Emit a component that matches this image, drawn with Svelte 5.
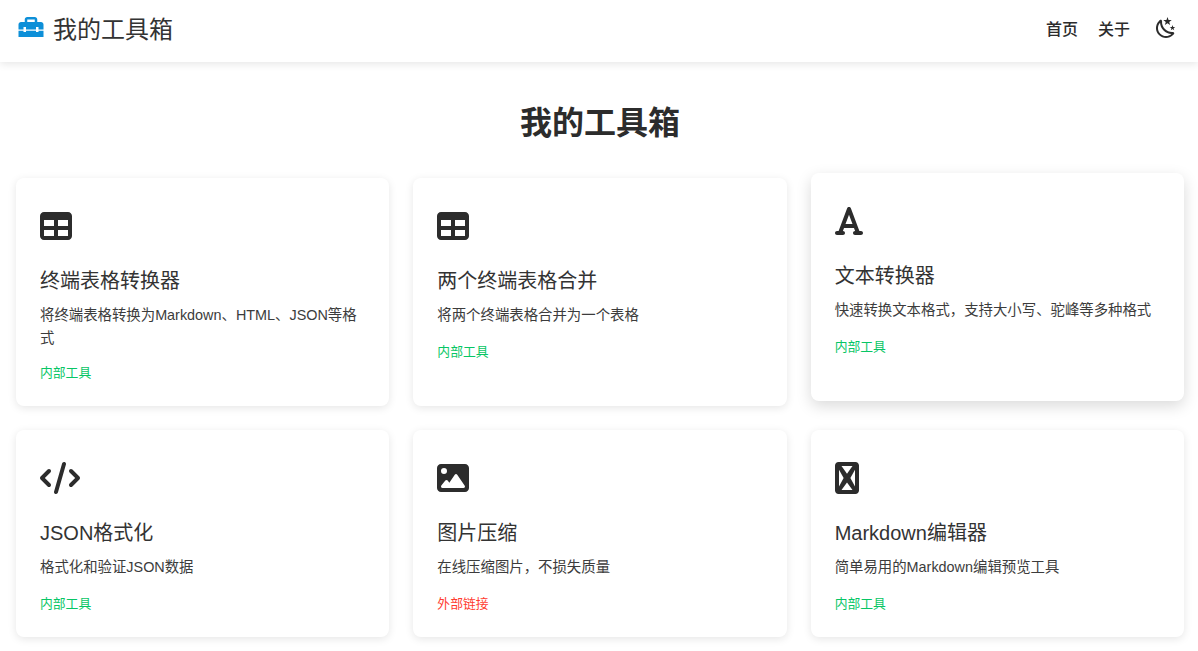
<script>
  const icons = {
    table: {
      box: "0 0 512 512",
      width: 32,
      d: "M64 256V160H224v96H64zm0 64H224v96H64V320zm224 96V320H448v96H288zM448 256H288V160H448v96zM64 32C28.7 32 0 60.7 0 96V416c0 35.3 28.7 64 64 64H448c35.3 0 64-28.7 64-64V96c0-35.3-28.7-64-64-64H64z",
    },
    font: {
      box: "0 0 448 512",
      width: 28,
      d: "M254 52.8C249.3 40.3 237.3 32 224 32s-25.3 8.3-30 20.8L57.8 416H32c-17.7 0-32 14.3-32 32s14.3 32 32 32h96c17.7 0 32-14.3 32-32s-14.3-32-32-32h-1.8l18-48H303.8l18 48H320c-17.7 0-32 14.3-32 32s14.3 32 32 32h96c17.7 0 32-14.3 32-32s-14.3-32-32-32H390.2L254 52.8zM279.8 304H168.2L224 155.1 279.8 304z",
    },
    code: {
      box: "0 0 640 512",
      width: 40,
      d: "M392.8 1.2c-17-4.9-34.7 5-39.6 22l-128 448c-4.9 17 5 34.7 22 39.6s34.7-5 39.6-22l128-448c4.9-17-5-34.7-22-39.6zm80.6 120.1c-12.5 12.5-12.5 32.8 0 45.3L562.7 256l-89.4 89.4c-12.5 12.5-12.5 32.8 0 45.3s32.8 12.5 45.3 0l112-112c12.5-12.5 12.5-32.8 0-45.3l-112-112c-12.5-12.5-32.8-12.5-45.3 0zm-306.7 0c-12.5-12.5-32.8-12.5-45.3 0l-112 112c-12.5 12.5-12.5 32.8 0 45.3l112 112c12.5 12.5 32.8 12.5 45.3 0s12.5-32.8 0-45.3L77.3 256l89.4-89.4c12.5-12.5 12.5-32.8 0-45.3z",
    },
    image: {
      box: "0 0 512 512",
      width: 32,
      d: "M0 96C0 60.7 28.7 32 64 32H448c35.3 0 64 28.7 64 64V416c0 35.3-28.7 64-64 64H64c-35.3 0-64-28.7-64-64V96zM323.8 202.5c-4.5-6.6-11.9-10.5-19.8-10.5s-15.4 3.9-19.8 10.5l-87 127.6L170.7 297c-4.6-5.7-11.5-9-18.7-9s-14.2 3.3-18.7 9l-64 80c-5.8 7.2-6.9 17.1-2.9 25.4s12.4 13.6 21.6 13.6h96 32H424c8.9 0 17.1-4.9 21.2-12.8s3.6-17.4-1.4-24.7l-120-176zM112 192a48 48 0 1 0 0-96 48 48 0 1 0 0 96z",
    },
    box: {
      box: "0 0 384 512",
      width: 24,
      d: "M56 0H328C359 0 384 25 384 56V456C384 487 359 512 328 512H56C25 512 0 487 0 456V56C0 25 25 0 56 0ZM104 64L192 186 280 64ZM64 122V390L138 256ZM320 122L246 256 320 390ZM192 326L104 448H280Z",
    },
  };

  const tools = [
    { icon: "table", name: "终端表格转换器", desc: "将终端表格转换为Markdown、HTML、JSON等格式", wrapped: true },
    { icon: "table", name: "两个终端表格合并", desc: "将两个终端表格合并为一个表格" },
    { icon: "font", name: "文本转换器", desc: "快速转换文本格式，支持大小写、驼峰等多种格式", hover: true },
    { icon: "code", name: "JSON格式化", desc: "格式化和验证JSON数据" },
    { icon: "image", name: "图片压缩", desc: "在线压缩图片，不损失质量", external: true },
    { icon: "box", name: "Markdown编辑器", desc: "简单易用的Markdown编辑预览工具" },
  ];
</script>

<nav class="navbar">
  <div class="brand">
    <svg class="logo" viewBox="0 0 24 24" aria-hidden="true">
      <path d="M18 16H16V15H8V16H6V15H2V20H22V15H18V16M20 8H17V6C17 4.9 16.1 4 15 4H9C7.9 4 7 4.9 7 6V8H4C2.9 8 2 8.9 2 10V14H6V12H8V14H16V12H18V14H22V10C22 8.9 21.1 8 20 8M15 8H9V6H15V8Z" />
    </svg>
    <span class="brand-name">我的工具箱</span>
  </div>
  <div class="links">
    <span>首页</span>
    <span>关于</span>
    <svg class="moon" viewBox="0 0 24 24" aria-hidden="true">
      <path d="M17.75,4.09L15.22,6.03L16.13,9.09L13.5,7.28L10.87,9.09L11.78,6.03L9.25,4.09L12.44,4L13.5,1L14.56,4L17.75,4.09M21.25,11L19.61,12.25L20.2,14.23L18.5,13.06L16.8,14.23L17.39,12.25L15.75,11L17.81,10.95L18.5,9L19.19,10.95L21.25,11M18.97,15.95C19.8,15.87 20.69,17.05 20.16,17.8C19.84,18.25 19.5,18.67 19.08,19.07C15.17,23 8.84,23 4.94,19.07C1.03,15.17 1.03,8.83 4.94,4.93C5.34,4.53 5.76,4.17 6.21,3.85C6.96,3.32 8.14,4.21 8.06,5.04C7.79,7.9 8.75,10.87 10.95,13.06C13.14,15.26 16.1,16.22 18.97,15.95M17.33,17.97C14.5,17.81 11.7,16.64 9.53,14.5C7.36,12.31 6.2,9.5 6.04,6.68C3.23,9.82 3.34,14.64 6.35,17.66C9.37,20.67 14.19,20.78 17.33,17.97Z" />
    </svg>
  </div>
</nav>

<main>
  <h1>我的工具箱</h1>
  <div class="grid">
    {#each tools as tool}
      <div class="card" class:hover={tool.hover}>
        <div class="icon">
          <svg viewBox={icons[tool.icon].box} style:width={icons[tool.icon].width + "px"} aria-hidden="true">
            <path fill-rule="evenodd" d={icons[tool.icon].d} />
          </svg>
        </div>
        <h2>{tool.name}</h2>
        <p class:wrapped={tool.wrapped}>{tool.desc}</p>
        <span class="tag" class:external={tool.external}>{tool.external ? "外部链接" : "内部工具"}</span>
      </div>
    {/each}
  </div>
</main>

<style>
  :global(body) {
    background: #fff;
    color: #2c2c2c;
    font-family: "Liberation Sans", "Noto Sans CJK SC", sans-serif;
  }

  .navbar {
    height: 62px;
    box-sizing: border-box;
    display: flex;
    align-items: center;
    justify-content: space-between;
    padding: 0 20px 6px 15px;
    background: #fff;
    box-shadow: 0 2px 8px rgba(0, 0, 0, 0.1);
  }

  .brand {
    display: flex;
    align-items: center;
    gap: 8px;
    font-size: 24px;
    color: #333;
  }

  .brand-name {
    margin-bottom: 2px;
  }

  .logo {
    width: 30px;
    height: 30px;
    fill: #0d8fd8;
    margin-top: -3px;
    margin-left: 1px;
    margin-right: -1px;
  }

  .links {
    display: flex;
    align-items: center;
    gap: 20px;
    font-size: 16px;
    font-weight: 500;
  }

  .moon {
    width: 24px;
    height: 24px;
    fill: #2c2c2c;
    margin-left: 4px;
  }

  main {
    padding: 0 14px 14px 16px;
  }

  h1 {
    margin: 0;
    padding-top: 37px;
    height: 116px;
    box-sizing: border-box;
    font-size: 32px;
    line-height: 48px;
    font-weight: 700;
    text-align: center;
  }

  .grid {
    display: grid;
    grid-template-columns: repeat(3, 1fr);
    gap: 24px;
  }

  .card {
    display: flex;
    flex-direction: column;
    align-items: flex-start;
    padding: 24px;
    background: #fff;
    border-radius: 8px;
    box-shadow: 0 2px 8px rgba(0, 0, 0, 0.1);
  }

  .card.hover {
    transform: translateY(-5px);
    box-shadow: 0 5px 15px rgba(0, 0, 0, 0.15);
  }

  .icon {
    height: 48px;
    display: flex;
    align-items: center;
    margin-bottom: 16px;
  }

  .icon svg {
    height: 32px;
    fill: #2c2c2c;
  }

  h2 {
    margin: 0 0 8px;
    font-size: 20px;
    line-height: 30px;
    font-weight: 400;
    color: #333;
  }

  p {
    margin: 0 0 16px;
    font-size: 14.4px;
    line-height: 23px;
    color: #3c3c3c;
  }

  p.wrapped {
    margin-bottom: 14px;
  }

  .tag {
    font-size: 12.8px;
    line-height: 18px;
    color: #07c665;
  }

  .tag.external {
    color: #ff3b30;
  }
</style>
